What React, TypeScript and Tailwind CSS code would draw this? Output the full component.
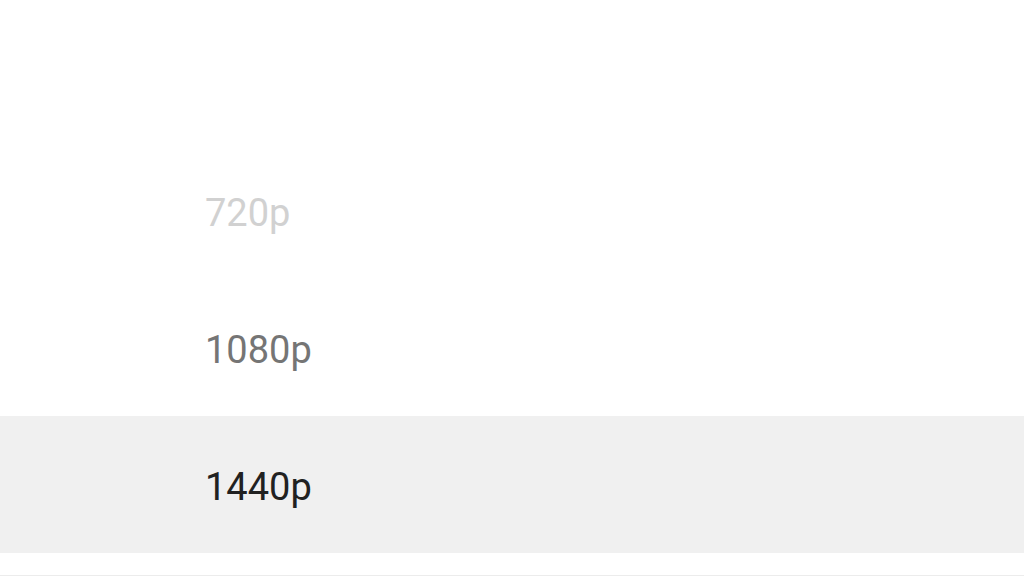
const options = [
  { label: "720p", tone: "text-[#d1d1d1]", selected: false },
  { label: "1080p", tone: "text-[#757575]", selected: false },
  { label: "1440p", tone: "text-[#212121]", selected: true },
];

export default function App() {
  return (
    <div className="flex h-[576px] w-[1024px] flex-col overflow-hidden bg-white font-['Roboto',sans-serif]">
      <div className="h-[142px] shrink-0" />
      {options.map((o) => (
        <div
          key={o.label}
          className={`flex h-[137px] shrink-0 items-center pl-[205px] pt-1 ${o.selected ? "bg-[#f0f0f0]" : ""}`}
        >
          <span className={`text-[38px] leading-none ${o.tone}`}>{o.label}</span>
        </div>
      ))}
      <div className="h-[22px] shrink-0" />
      <div className="h-px shrink-0 bg-[#ececec]" />
    </div>
  );
}
